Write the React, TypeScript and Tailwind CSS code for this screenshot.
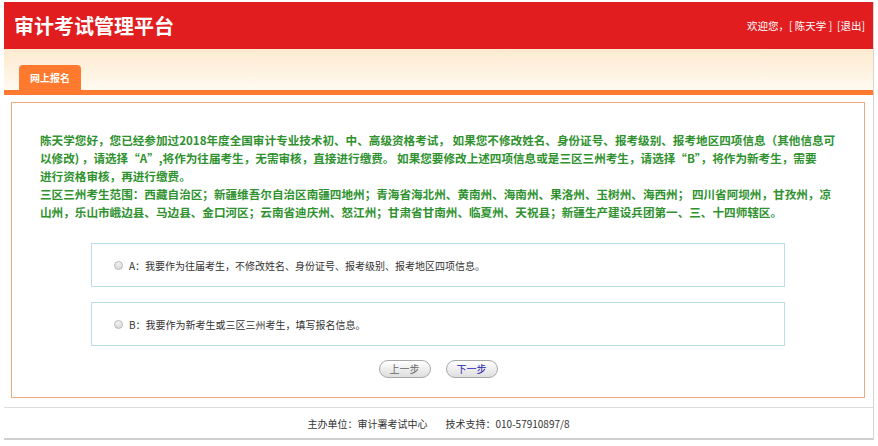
import React from 'react';

const cjk = "font-['Noto_Sans_CJK_SC','Noto_Sans',sans-serif]";

function Radio() {
  return (
    <span className="inline-block w-[9px] h-[9px] rounded-full border border-[#b8b8b8] bg-gradient-to-b from-[#f4f4f4] to-[#d8d8d8] shrink-0" />
  );
}

function Option({ label }: { label: string }) {
  return (
    <div className="h-[44px] border border-[#bcdcef] flex items-center pl-[22px] gap-[6px]">
      <Radio />
      <span className="text-[10px] text-[#333]">{label}</span>
    </div>
  );
}

function StepButton({ text, primary }: { text: string; primary?: boolean }) {
  return (
    <button
      className={
        'w-[52px] h-[18px] rounded-full border border-[#a8a8a8] bg-gradient-to-b from-white to-[#dedede] text-[10px] leading-none flex items-center justify-center ' +
        (primary ? 'text-[#2323b0]' : 'text-[#666]')
      }
    >
      {text}
    </button>
  );
}

export default function App() {
  return (
    <div className={`${cjk} bg-white w-[878px] h-[446px] overflow-hidden pt-[2px] pl-[4px]`}>
      <div className="w-[870px] border-r border-[#d4d4d4] flex flex-col">
        {/* Header */}
        <div className="h-[47px] bg-[#e11d1f] flex items-center justify-between pl-[10px] pr-[8px]">
          <h1 className="text-white text-[20px] font-bold">审计考试管理平台</h1>
          <div className="text-white text-[10.5px] whitespace-pre">欢迎您，[ 陈天学 ]  [退出]</div>
        </div>

        {/* Tab band */}
        <div className="h-[41px] bg-gradient-to-b from-[#fde9cf] to-[#fffaf0] flex items-end pl-[15px]">
          <div className="w-[62px] h-[25px] bg-[#ff7a2e] rounded-t-[4px] flex items-center justify-center text-white text-[10px] font-bold">
            网上报名
          </div>
        </div>
        <div className="h-[5px] bg-[#ff7a2e]" />

        {/* Content */}
        <div className="pt-[7px] pl-[7px] pr-[8px] pb-[9px]">
          <div className="border border-[#f0a97c] pt-[28px] pb-[19px] px-[28px]">
            <div className="text-[#2f922f] font-bold text-[11.6px] leading-[18px] whitespace-nowrap">
              <p>
                陈天学您好，您已经参加过2018年度全国审计专业技术初、中、高级资格考试， 如果您不修改姓名、身份证号、报考级别、报考地区四项信息（其他信息可
                <br />
                以修改) ，请选择“A”,将作为往届考生，无需审核，直接进行缴费。 如果您要修改上述四项信息或是三区三州考生，请选择“B”，将作为新考生，需要
                <br />
                进行资格审核，再进行缴费。
              </p>
              <p>
                三区三州考生范围：西藏自治区；新疆维吾尔自治区南疆四地州；青海省海北州、黄南州、海南州、果洛州、玉树州、海西州； 四川省阿坝州，甘孜州，凉
                <br />
                山州，乐山市峨边县、马边县、金口河区；云南省迪庆州、怒江州；甘肃省甘南州、临夏州、天祝县；新疆生产建设兵团第一、三、十四师辖区。
              </p>
            </div>

            <div className="w-[694px] mx-auto mt-[22px] flex flex-col gap-[15px]">
              <Option label="A：我要作为往届考生，不修改姓名、身份证号、报考级别、报考地区四项信息。" />
              <Option label="B：我要作为新考生或三区三州考生，填写报名信息。" />
            </div>

            <div className="flex justify-center gap-[15px] mt-[14px]">
              <StepButton text="上一步" />
              <StepButton text="下一步" primary />
            </div>
          </div>
        </div>

        {/* Footer */}
        <div className="h-[33px] border-t border-[#dcdcdc] border-b-2 border-b-[#cfcfcf] flex items-center justify-center text-[10px] text-[#333]">
          <span>主办单位：审计署考试中心</span>
          <span className="ml-[18px]">技术支持：010-57910897/8</span>
        </div>
      </div>
    </div>
  );
}
